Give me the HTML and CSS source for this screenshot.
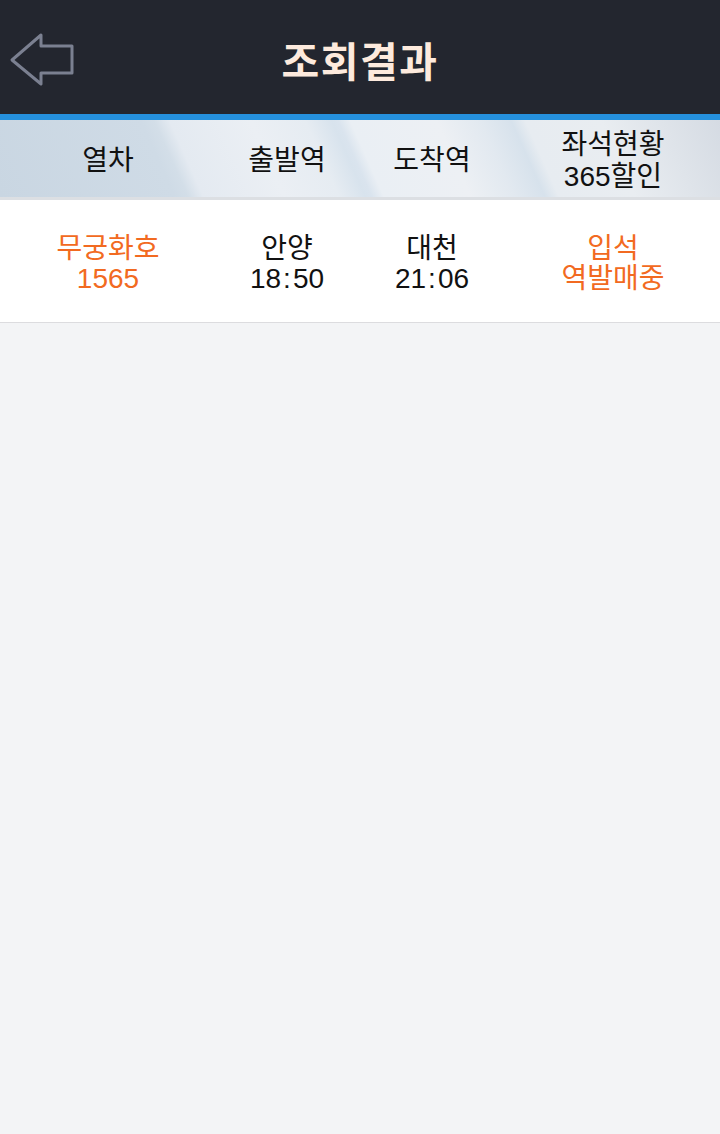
FILE: index.html
```html
<!DOCTYPE html>
<html lang="ko">
<head>
<meta charset="utf-8">
<title>조회결과</title>
<link rel="stylesheet" href="styles.css">
</head>
<body>
<header class="topbar">
  <button class="back" aria-label="뒤로">
    <svg width="80" height="60" viewBox="0 0 80 60">
      <path d="M41 5 L12 30 L41 54 L41 43 L72 43 L72 16 L41 16 Z" fill="none" stroke="#7b8091" stroke-width="3" stroke-linejoin="round" stroke-linecap="round"/>
    </svg>
  </button>
  <h1 class="title">조회결과</h1>
</header>
<div class="accent"></div>
<div class="cols head">
  <div class="cell"><p class="txt">열차</p></div>
  <div class="cell"><p class="txt">출발역</p></div>
  <div class="cell"><p class="txt">도착역</p></div>
  <div class="cell"><p class="txt">좌석현황<br>365할인</p></div>
</div>
<div class="cols row">
  <div class="cell orange"><p class="txt">무궁화호<br>1565</p></div>
  <div class="cell"><p class="txt">안양<br>18<span class="colon">:</span>50</p></div>
  <div class="cell"><p class="txt">대천<br>21<span class="colon">:</span>06</p></div>
  <div class="cell orange"><p class="txt">입석<br>역발매중</p></div>
</div>
</body>
</html>
```
FILE: styles.css
```css
html, body {
  margin: 0;
  padding: 0;
}
body {
  width: 720px;
  min-height: 1134px;
  background: #f3f4f6;
  font-family: "Liberation Sans", "Noto Sans CJK KR", sans-serif;
}
.topbar {
  height: 114px;
  background: #23262f;
  display: flex;
  align-items: center;
  justify-content: center;
  position: relative;
}
.back {
  position: absolute;
  left: 0;
  top: 30px;
  width: 80px;
  height: 60px;
  padding: 0;
  border: 0;
  background: none;
}
.back svg { display: block; }
.title {
  margin: 0;
  font-family: "Noto Sans CJK KR", sans-serif;
  font-size: 41px;
  font-weight: 700;
  color: #fdeadd;
  letter-spacing: 1.5px;
  line-height: 1;
  padding-top: 4px;
}
.accent {
  height: 6px;
  background: #2590dd;
}
.cols {
  display: grid;
  grid-template-columns: 216px 142px 148px 214px;
}
.cell {
  display: flex;
  align-items: center;
  justify-content: center;
  text-align: center;
  font-size: 28px;
  color: #111;
}
.txt {
  margin: 0;
}
.head {
  height: 77px;
  border-bottom: 3px solid #dcdfe3;
  background: linear-gradient(66deg,
    #c9d6e2 0px, #cfdbe6 160px, #d3dee8 172px, #e4eaf1 186px,
    #ebeff4 260px, #e6ecf2 310px, #d8e3ed 334px, #dae4ee 340px,
    #eaeff4 351px, #edf0f4 430px, #e2e9f0 470px, #d7e2ec 498px,
    #e7ecf1 511px, #e9edf1 580px, #d5dbe3 689px);
}
.head .cell {
  line-height: 32px;
  padding-top: 5px;
}
.row {
  height: 122px;
  background: #fff;
  border-bottom: 1px solid #dcdcdf;
}
.row .cell {
  line-height: 30px;
  padding-top: 6px;
}
.colon {
  padding: 0 2px;
}
.orange {
  color: #f26a21;
}
```
